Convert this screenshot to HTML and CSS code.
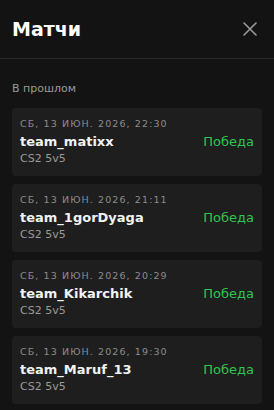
FILE: index.html
```html
<!DOCTYPE html>
<html lang="ru">
<head>
<meta charset="utf-8">
<link rel="stylesheet" href="styles.css">
</head>
<body>
<div class="panel">
  <header class="header">
    <h1 class="title">Матчи</h1>
    <button class="close" aria-label="Закрыть">
      <svg width="14" height="14" viewBox="0 0 14 14"><path d="M1 1L13 13M13 1L1 13" stroke="#9a9a9a" stroke-width="1.6" stroke-linecap="round"/></svg>
    </button>
  </header>
  <section class="section">
    <div class="label">В прошлом</div>
    <div class="list">
      <div class="card">
        <div class="date">СБ, 13 ИЮН. 2026, 22:30</div>
        <div class="row"><span class="team">team_matixx</span><span class="result">Победа</span></div>
        <div class="mode">CS2 5v5</div>
      </div>
      <div class="card">
        <div class="date">СБ, 13 ИЮН. 2026, 21:11</div>
        <div class="row"><span class="team">team_1gorDyaga</span><span class="result">Победа</span></div>
        <div class="mode">CS2 5v5</div>
      </div>
      <div class="card">
        <div class="date">СБ, 13 ИЮН. 2026, 20:29</div>
        <div class="row"><span class="team">team_Kikarchik</span><span class="result">Победа</span></div>
        <div class="mode">CS2 5v5</div>
      </div>
      <div class="card">
        <div class="date">СБ, 13 ИЮН. 2026, 19:30</div>
        <div class="row"><span class="team">team_Maruf_13</span><span class="result">Победа</span></div>
        <div class="mode">CS2 5v5</div>
      </div>
    </div>
  </section>
</div>
</body>
</html>
```
FILE: styles.css
```css
html, body {
  margin: 0;
  padding: 0;
  background: #131313;
  font-family: "DejaVu Sans", "Noto Sans", sans-serif;
  color: #fff;
}
.panel {
  width: 274px;
  height: 410px;
  overflow: hidden;
}
.header {
  height: 58px;
  display: flex;
  align-items: center;
  justify-content: space-between;
  padding: 0 17px 0 12px;
  border-bottom: 1px solid #2a2a2a;
}
.title {
  margin: 0;
  font-size: 19px;
  font-weight: bold;
  line-height: 24px;
  color: #fff;
}
.close {
  background: none;
  border: 0;
  padding: 0;
  width: 14px;
  height: 14px;
  display: flex;
  cursor: pointer;
}
.section {
  padding: 23px 12px 0;
}
.label {
  font-size: 11px;
  line-height: 14px;
  color: #9a9a9a;
  margin-bottom: 12px;
}
.list {
  display: flex;
  flex-direction: column;
  gap: 8px;
}
.card {
  background: #1e1e1e;
  border-radius: 4px;
  padding: 9px 8px 9px 8px;
  height: 68px;
  box-sizing: border-box;
}
.date {
  font-size: 9.5px;
  line-height: 13px;
  letter-spacing: 1.1px;
  color: #8c8c8c;
}
.row {
  display: flex;
  justify-content: space-between;
  align-items: center;
  margin-top: 3px;
  line-height: 17px;
}
.team {
  font-size: 13px;
  font-weight: bold;
  color: #f2f2f2;
}
.result {
  font-size: 13px;
  color: #2fc553;
}
.mode {
  font-size: 11px;
  line-height: 14px;
  color: #9a9a9a;
  margin-top: 2px;
}
```
